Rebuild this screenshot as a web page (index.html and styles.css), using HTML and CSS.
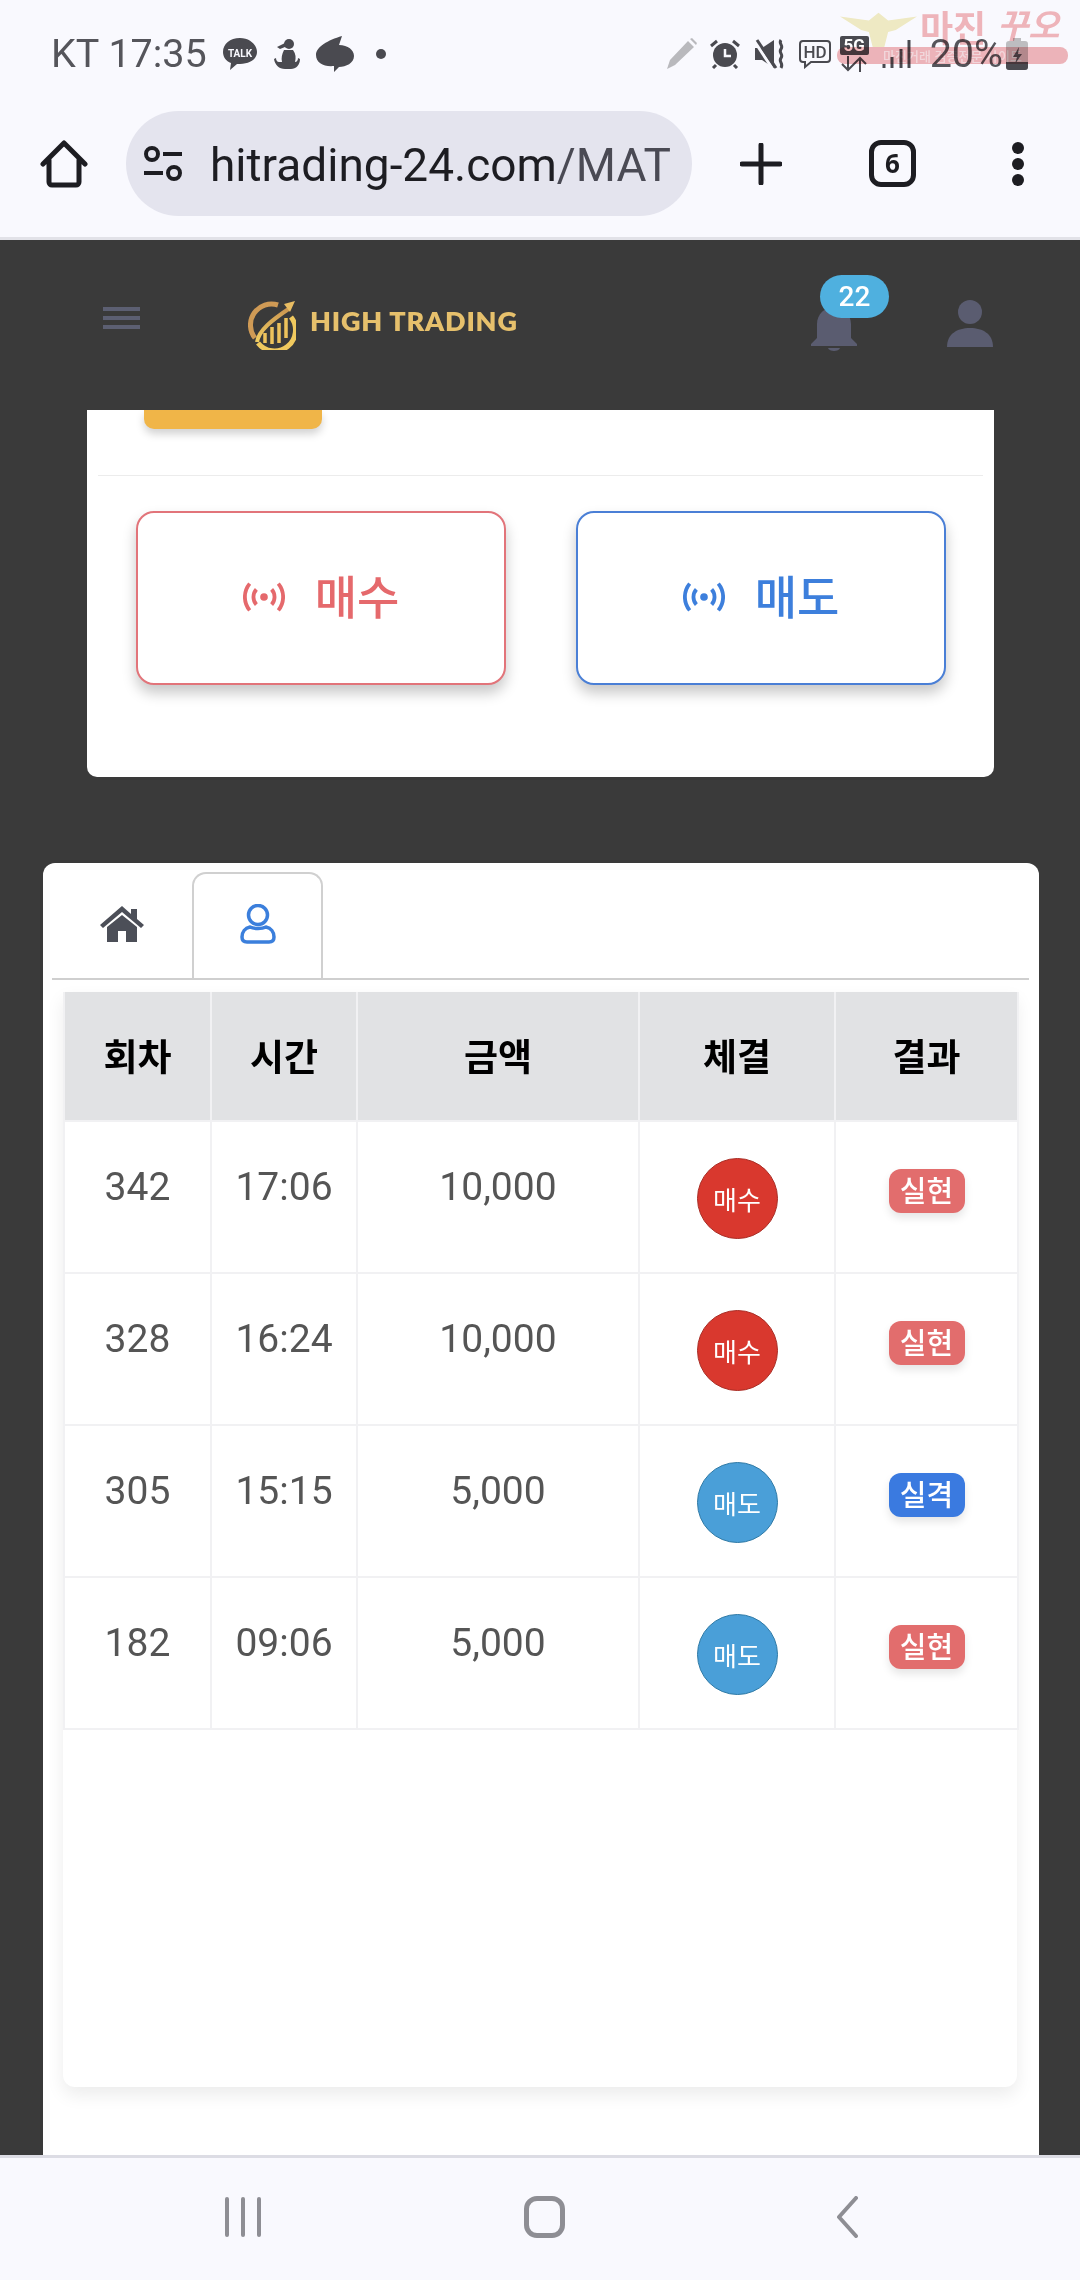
FILE: index.html
```html
<!DOCTYPE html>
<html lang="ko">
<head>
  <meta charset="UTF-8">
  <meta name="viewport" content="width=device-width, initial-scale=1.0">
  <title>High Trading</title>
  <link rel="stylesheet" href="styles.css">
</head>
<body>
  <!-- phone status bar + browser toolbar -->
  <div class="chrome">
    <div class="statusbar">
      <div class="status-left">
        <span class="status-text">KT 17:35</span>
        <svg class="ic-talk" viewBox="0 0 36 34"><path d="M18 1C8 1 1 7 1 15c0 5 3 9 8 11l-1 7 7-6h3c10 0 17-5 17-12S28 1 18 1z" fill="#4a4a50"/><text x="18" y="20" text-anchor="middle" class="talk-label">TALK</text></svg>
        <svg class="ic-figure" viewBox="0 0 26 32"><circle cx="15" cy="6" r="5" fill="#4a4a50"/><path d="M3 9l8-4v4l-5 2z" fill="#4a4a50"/><path d="M10 12h9c3 4 3 8 2 12 2 0 3-2 3-4l2 1c0 6-4 10-9 10h-6C5 31 1 27 0 21l2-1c0 2 1 4 3 4h3c-1-4 0-8 2-12z" fill="#4a4a50"/></svg>
        <svg class="ic-swirl" viewBox="0 0 38 36"><path d="M26 0l-3 9c9 0 15 5 15 11 0 7-8 11-15 11l-5 5 0-6C8 31 0 27 0 19 0 11 12 4 26 0z" fill="#4a4a50"/></svg>
        <span class="status-dot"></span>
      </div>
      <div class="status-right">
        <svg class="ic-pencil" viewBox="0 0 31 32"><path d="M1 31l3-9L22 3l6 6L9 27zM24 1l2-1 5 5-1 2z" fill="#b9b9bd"/></svg>
        <svg class="ic-alarm" viewBox="0 0 30 30"><circle cx="15" cy="16" r="12" fill="#4a4a50"/><path d="M15 10v7h6" fill="none" stroke="#f9f9fe" stroke-width="2.5"/><path d="M1 7l6-5M29 7l-6-5" stroke="#4a4a50" stroke-width="3"/><path d="M6 26l-3 3M24 26l3 3" stroke="#4a4a50" stroke-width="3"/></svg>
        <svg class="ic-mute" viewBox="0 0 30 30"><path d="M0 9h7l12-8v28L7 21H0z" fill="#4a4a50"/><path d="M0 3l17 26" stroke="#f9f9fe" stroke-width="3"/><path d="M2 1l19 28" stroke="#4a4a50" stroke-width="3"/><path d="M26 1c-3 4 3 5 0 9s3 5 0 9 3 5 0 10" fill="none" stroke="#4a4a50" stroke-width="3"/></svg>
        <svg class="ic-hd" viewBox="0 0 34 30"><path d="M5 2h24a3 3 0 0 1 3 3v15a3 3 0 0 1-3 3H13l-6 5v-5H5a3 3 0 0 1-3-3V5a3 3 0 0 1 3-3z" fill="none" stroke="#4a4a50" stroke-width="2"/><text x="17" y="19" text-anchor="middle" class="hd-label">HD</text></svg>
        <div class="net">
          <span class="net-5g">5G</span>
          <svg class="ic-arrows" viewBox="0 0 28 16"><path d="M8 0v14M2 8l6 6 6-6M20 16V2M14 8l6-6 6 6" fill="none" stroke="#4a4a50" stroke-width="2"/></svg>
        </div>
        <svg class="ic-signal" viewBox="0 0 30 30"><path d="M2 25v4M10 18v11M19 10v19M27 1v28" stroke="#4a4a50" stroke-width="3"/></svg>
        <span class="status-text status-batt">20%</span>
        <svg class="ic-batt" viewBox="0 0 22 32"><path d="M7 0h8v3h4a3 3 0 0 1 3 3v23a3 3 0 0 1-3 3H3a3 3 0 0 1-3-3V6a3 3 0 0 1 3-3h4z" fill="#bdbdc0"/><path d="M0 24h22v5a3 3 0 0 1-3 3H3a3 3 0 0 1-3-3z" fill="#4a4a50"/><path d="M13 9l-6 10h4l-2 7 7-10h-4z" fill="#4a4a50"/></svg>
      </div>
      <!-- site watermark stamped on the capture -->
      <div class="watermark">
        <svg class="wm-eagle" viewBox="0 0 80 36"><path d="M0 4l30 4 10-8 10 8 30-4-22 14-8 2-4 16h-12l-4-16-8-2z" fill="#f4efc4"/></svg>
        <span class="wm-title">마진</span>
        <span class="wm-brand">꾸오</span>
        <span class="wm-bar">마진거래 검증전문 사이트</span>
      </div>
    </div>
    <div class="toolbar">
      <svg class="ic-home" viewBox="0 0 48 48"><path d="M3 24L24 3l21 21M9 20v22a3 3 0 0 0 3 3h24a3 3 0 0 0 3-3V20" fill="none" stroke="#1d1d22" stroke-width="5" stroke-linecap="round" stroke-linejoin="round"/></svg>
      <div class="urlbar">
        <svg class="ic-tune" viewBox="0 0 40 36"><circle cx="9" cy="8" r="6" fill="none" stroke="#1d1d22" stroke-width="4"/><path d="M20 8h19M1 27h19" stroke="#1d1d22" stroke-width="4"/><circle cx="31" cy="27" r="6" fill="none" stroke="#1d1d22" stroke-width="4"/></svg>
        <span class="url-text">hitrading-24.com<span class="url-path">/MAT</span></span>
      </div>
      <svg class="ic-plus" viewBox="0 0 42 42"><path d="M21 2v38M2 21h38" stroke="#1d1d22" stroke-width="5" stroke-linecap="round"/></svg>
      <span class="tabcount">6</span>
      <div class="kebab"><i></i><i></i><i></i></div>
    </div>
  </div>

  <header class="site-header">
    <div class="burger"><i></i><i></i><i></i></div>
    <svg class="logo-mark" viewBox="0 0 48 50">
      <defs>
        <linearGradient id="goldA" x1="0" y1="0" x2="0" y2="1"><stop offset="0" stop-color="#c99450"/><stop offset="1" stop-color="#f2cf62"/></linearGradient>
      </defs>
      <path d="M30 5A21 21 0 0 0 7 38" fill="none" stroke="#cf9a55" stroke-width="5"/>
      <path d="M43 17A21 21 0 0 1 10 43" fill="none" stroke="#f0c95e" stroke-width="5"/>
      <path d="M9 42C11 30 24 20 42 8" fill="none" stroke="url(#goldA)" stroke-width="4"/>
      <path d="M47 1l-11 3 6 8z" fill="#e8bc62"/>
      <path d="M17 43V33M24 44V27M31 43V23M38 38V18" stroke="#eec35c" stroke-width="3.5"/>
    </svg>
    <span class="logo-text">HIGH TRADING</span>
    <div class="bell">
      <svg class="ic-bell" viewBox="0 0 48 46"><path d="M24 2c-9 0-17 7-17 17v14l-6 6v2h46v-2l-6-6V19C41 9 33 2 24 2z" fill="#5a5c70"/><path d="M18 43h12c-1 4-11 4-12 0z" fill="#5a5c70"/></svg>
      <span class="bell-count">22</span>
    </div>
    <svg class="ic-user" viewBox="0 0 48 48"><circle cx="24" cy="12" r="12" fill="#5a5c70"/><path d="M1 47c0-13 10-19 23-19s23 6 23 19z" fill="#5a5c70"/></svg>
  </header>

  <main class="content">
    <section class="order-card">
      <div class="submit-stub"></div>
      <hr class="order-rule">
      <div class="order-btns">
        <button class="order-btn buy">
          <svg class="ic-live" viewBox="0 0 44 32"><circle cx="22" cy="16" r="4"/><path class="wave" d="M14 8a12 12 0 0 0 0 16M30 8a12 12 0 0 1 0 16M7 2a22 22 0 0 0 0 28M37 2a22 22 0 0 1 0 28"/></svg>
          <span class="order-label">매수</span>
        </button>
        <button class="order-btn sell">
          <svg class="ic-live" viewBox="0 0 44 32"><circle cx="22" cy="16" r="4"/><path class="wave" d="M14 8a12 12 0 0 0 0 16M30 8a12 12 0 0 1 0 16M7 2a22 22 0 0 0 0 28M37 2a22 22 0 0 1 0 28"/></svg>
          <span class="order-label">매도</span>
        </button>
      </div>
    </section>

    <section class="history">
      <div class="tabs">
        <div class="tab">
          <svg class="ic-tabhome" viewBox="0 0 44 36"><path d="M22 0L0 19l3 3L22 6l19 16 3-3-7-6V3h-6v5z" fill="#4c4f58"/><path d="M7 21L22 9l15 12v15H26V25h-8v11H7z" fill="#4c4f58"/></svg>
        </div>
        <div class="tab active">
          <svg class="ic-tabuser" viewBox="0 0 36 40"><circle cx="18" cy="11" r="9.5" fill="none" stroke="#3b7fdc" stroke-width="3.5"/><path d="M10 23c4 2 12 2 16 0 5 1 8 5 8 10 0 4-2 5-5 5H7c-3 0-5-1-5-5 0-5 3-9 8-10z" fill="none" stroke="#3b7fdc" stroke-width="3.5"/></svg>
        </div>
      </div>
      <div class="table-card">
        <table class="trades">
          <colgroup>
            <col class="c-round"><col class="c-time"><col class="c-amount"><col class="c-side"><col class="c-result">
          </colgroup>
          <thead>
            <tr><th>회차</th><th>시간</th><th>금액</th><th>체결</th><th>결과</th></tr>
          </thead>
          <tbody>
            <tr>
              <td>342</td><td>17:06</td><td>10,000</td>
              <td class="cell-side"><span class="side red">매수</span></td>
              <td class="cell-result"><span class="result win">실현</span></td>
            </tr>
            <tr>
              <td>328</td><td>16:24</td><td>10,000</td>
              <td class="cell-side"><span class="side red">매수</span></td>
              <td class="cell-result"><span class="result win">실현</span></td>
            </tr>
            <tr>
              <td>305</td><td>15:15</td><td>5,000</td>
              <td class="cell-side"><span class="side blue">매도</span></td>
              <td class="cell-result"><span class="result lose">실격</span></td>
            </tr>
            <tr>
              <td>182</td><td>09:06</td><td>5,000</td>
              <td class="cell-side"><span class="side blue">매도</span></td>
              <td class="cell-result"><span class="result win">실현</span></td>
            </tr>
          </tbody>
        </table>
      </div>
    </section>
  </main>

  <nav class="navbar">
    <div class="nav-recents"><i></i><i></i><i></i></div>
    <span class="nav-home"></span>
    <svg class="nav-back" viewBox="0 0 22 42"><path d="M20 2L3 21l17 19" fill="none" stroke="#8e8e94" stroke-width="4" stroke-linecap="round" stroke-linejoin="round"/></svg>
  </nav>
</body>
</html>
```

FILE: styles.css
```css
* {
  box-sizing: border-box;
}

body {
  margin: 0;
  height: 2280px;
  display: flex;
  flex-direction: column;
  overflow: hidden;
  background: #3a3a3a;
  font-family: Roboto, "Noto Sans CJK KR", sans-serif;
}

svg {
  display: block;
  flex: none;
}

/* browser chrome */
.chrome {
  height: 240px;
  background: #f9f9fe;
  border-bottom: 3px solid #e2e2e8;
  flex: none;
}

.statusbar {
  position: relative;
  height: 108px;
  padding: 36px 52px 0 51px;
  display: flex;
  justify-content: space-between;
  align-items: flex-start;
}

.status-left,
.status-right {
  display: flex;
  align-items: center;
  height: 36px;
}

.status-text {
  font-size: 39.5px;
  color: #55555b;
  line-height: 36px;
}

.ic-talk { width: 36px; height: 34px; margin-left: 15px; }
.ic-figure { width: 26px; height: 32px; margin-left: 16px; }
.ic-swirl { width: 38px; height: 36px; margin-left: 16px; }

.talk-label {
  font: 700 10px Roboto, sans-serif;
  fill: #f9f9fe;
}

.hd-label {
  font: 500 17px Roboto, sans-serif;
  fill: #4a4a50;
}

.status-dot {
  width: 10px;
  height: 10px;
  border-radius: 50%;
  background: #4a4a50;
  margin-left: 22px;
}

.ic-pencil { width: 31px; height: 32px; }
.ic-alarm { width: 30px; height: 30px; margin-left: 13px; }
.ic-mute { width: 30px; height: 30px; margin-left: 15px; }
.ic-hd { width: 34px; height: 30px; margin-left: 13px; }

.net {
  margin-left: 8px;
  width: 29px;
}

.net-5g {
  display: block;
  height: 19px;
  background: #4a4a50;
  color: #fff;
  font-size: 17px;
  font-weight: 700;
  line-height: 19px;
  text-align: center;
  border-radius: 2px;
}

.ic-arrows { width: 28px; height: 16px; margin-top: 1px; }
.ic-signal { width: 30px; height: 30px; margin-left: 13px; }
.status-batt { margin-left: 18px; }
.ic-batt { width: 22px; height: 32px; margin-left: 3px; }

.watermark {
  position: absolute;
  left: 837px;
  top: 8px;
  width: 231px;
  height: 56px;
  mix-blend-mode: multiply;
}

.wm-eagle {
  position: absolute;
  left: 3px;
  top: 4px;
  width: 77px;
  height: 36px;
}

.wm-title {
  position: absolute;
  left: 83px;
  top: -2px;
  font: 700 36px/40px "Noto Sans CJK KR", sans-serif;
  color: #f4b9bb;
  white-space: nowrap;
}

.wm-brand {
  position: absolute;
  left: 160px;
  top: -4px;
  font: italic 700 34px/40px "Noto Sans CJK KR", sans-serif;
  color: #f4b9bb;
  white-space: nowrap;
}

.wm-bar {
  position: absolute;
  left: 0;
  right: 0;
  top: 39px;
  height: 17px;
  border-radius: 8px;
  background: #f2b8ba;
  color: #f7dcdc;
  font: 500 13px/17px "Noto Sans CJK KR", sans-serif;
  text-align: center;
}

.toolbar {
  display: flex;
  align-items: center;
  height: 105px;
  margin-top: 3px;
  padding-left: 40px;
}

.ic-home { width: 48px; height: 48px; }

.urlbar {
  width: 566px;
  height: 105px;
  margin-left: 38px;
  padding-left: 17px;
  background: #e4e4ee;
  border-radius: 53px;
  display: flex;
  align-items: center;
}

.ic-tune { width: 40px; height: 36px; flex: none; }

.url-text {
  margin: 2px 0 0 27px;
  font-size: 46px;
  color: #1d1d22;
  white-space: nowrap;
}

.url-path { color: #4a4a54; }

.ic-plus { width: 42px; height: 42px; margin-left: 48px; }

.tabcount {
  width: 47px;
  height: 47px;
  margin-left: 87px;
  border: 5px solid #1d1d22;
  border-radius: 12px;
  color: #1d1d22;
  font: 700 26px/37px "Open Sans", sans-serif;
  text-align: center;
}

.kebab {
  margin-left: 96px;
  display: flex;
  flex-direction: column;
  gap: 4px;
}

.kebab i {
  display: block;
  width: 12px;
  height: 12px;
  border-radius: 50%;
  background: #1d1d22;
}

/* site header */
.site-header {
  position: relative;
  height: 170px;
  flex: none;
  display: flex;
  align-items: flex-start;
  padding: 60px 0 0 103px;
  background: #3a3a3a;
}

.burger {
  width: 37px;
  margin-top: 7px;
  display: flex;
  flex-direction: column;
  gap: 5px;
}

.burger i {
  display: block;
  height: 4px;
  background: #5c5f72;
}

.logo-mark {
  width: 48px;
  height: 50px;
  margin-left: 108px;
}

.logo-text {
  width: 207px;
  margin: 5px 0 0 14px;
  font: 800 27px/32px Lato, sans-serif;
  letter-spacing: .8px;
  color: #e6c06c;
  white-space: nowrap;
}

.bell {
  position: relative;
  width: 48px;
  margin: 5px 0 0 293px;
}

.ic-bell { width: 48px; height: 46px; }

.bell-count {
  position: absolute;
  left: 10px;
  top: -30px;
  width: 69px;
  height: 43px;
  border-radius: 22px;
  background: #4fb0df;
  color: #fff;
  font-size: 28px;
  font-weight: 500;
  line-height: 43px;
  text-align: center;
}

.ic-user {
  width: 48px;
  height: 48px;
  margin-left: 88px;
}

/* scrolled page */
.content {
  flex: 1;
  min-height: 0;
  overflow: hidden;
  display: flex;
  flex-direction: column;
}

.order-card {
  flex: none;
  width: 907px;
  height: 367px;
  margin-left: 87px;
  background: #fff;
  border-radius: 0 0 10px 10px;
}

.submit-stub {
  width: 178px;
  height: 19px;
  margin-left: 57px;
  background: #f0b548;
  border-radius: 0 0 10px 10px;
  box-shadow: 0 5px 8px rgba(0, 0, 0, .18);
}

.order-rule {
  margin: 46px 11px 0;
  border: 0;
  border-top: 1px solid #ececec;
}

.order-btns {
  display: flex;
  gap: 70px;
  margin: 35px 48px 0 49px;
}

.order-btn {
  flex: 1;
  height: 174px;
  display: flex;
  align-items: center;
  justify-content: center;
  gap: 30px;
  padding: 0 0 2px;
  background: #fff;
  border: 2px solid;
  border-radius: 18px;
  font: 500 46px "Noto Sans CJK KR", sans-serif;
  box-shadow: 0 8px 14px rgba(0, 0, 0, .22);
}

.order-label {
  line-height: 1;
  margin-bottom: 6px;
}

.ic-live { width: 42px; height: 32px; fill: currentColor; }

.wave {
  fill: none;
  stroke: currentColor;
  stroke-width: 4;
}

.buy { color: #e5696c; border-color: #e2747a; }
.sell { color: #3d7fdc; border-color: #4a7fd6; }

.history {
  flex: none;
  width: 996px;
  height: 1400px;
  margin: 86px 0 0 43px;
  background: #fff;
  border-radius: 12px 12px 0 0;
}

.tabs {
  display: flex;
  height: 117px;
  margin: 0 10px 0 9px;
  padding-top: 9px;
  border-bottom: 2px solid #cfcfcf;
}

.tab {
  width: 140px;
  height: 106px;
  display: flex;
  align-items: center;
  justify-content: center;
}

.tab.active {
  width: 131px;
  border: 2px solid #d0d0d0;
  border-bottom: 0;
  border-radius: 14px 14px 0 0;
  background: #fff;
}

.ic-tabhome { width: 44px; height: 36px; margin-top: -2px; }
.ic-tabuser { width: 36px; height: 40px; margin-top: -4px; }

.table-card {
  width: 954px;
  height: 1095px;
  margin: 12px 0 0 20px;
  background: #fff;
  border-radius: 0 0 12px 12px;
  box-shadow: 0 8px 18px rgba(0, 0, 0, .08);
}

.trades {
  width: 954px;
  table-layout: fixed;
  border-collapse: collapse;
}

.c-round { width: 147px; }
.c-time { width: 146px; }
.c-amount { width: 282px; }
.c-side { width: 196px; }
.c-result { width: 183px; }

.trades th {
  height: 129px;
  padding-bottom: 4px;
  background: #e1e2e4;
  border: 2px solid #f1f1f3;
  border-top: 0;
  color: #000;
  font: 700 37px "Noto Sans CJK KR", sans-serif;
  text-align: center;
}

.trades td {
  height: 152px;
  padding: 43px 0 0;
  border: 2px solid #f1f1f3;
  color: #555;
  font-size: 39px;
  line-height: 44px;
  text-align: center;
  vertical-align: top;
}

.trades .cell-side { padding-top: 36px; }
.trades .cell-result { padding-top: 47px; }

.side {
  display: flex;
  align-items: center;
  justify-content: center;
  width: 81px;
  height: 81px;
  margin: 0 auto;
  border: 1px solid;
  border-radius: 50%;
  color: #fff;
  font: 400 26px "Noto Sans CJK KR", sans-serif;
}

.red { background: #d9382e; border-color: #a92d25; }
.blue { background: #4a9fd8; border-color: #2f7aa6; }

.result {
  display: block;
  width: 76px;
  height: 44px;
  margin: 0 auto;
  border-radius: 12px;
  color: #fff;
  font: 500 29px/41px "Noto Sans CJK KR", sans-serif;
  box-shadow: 0 5px 8px rgba(0, 0, 0, .1);
}

.win { background: #e26d6d; }
.lose { background: #3a7ae0; }

/* android nav */
.navbar {
  height: 125px;
  flex: none;
  position: relative;
  display: flex;
  align-items: center;
  background: #f9f9fe;
  border-top: 3px solid #dcdce4;
  padding: 0 0 4px 225px;
}

.nav-recents {
  display: flex;
  gap: 12px;
}

.nav-recents i {
  display: block;
  width: 4px;
  height: 40px;
  border-radius: 2px;
  background: #8e8e94;
}

.nav-home {
  width: 41px;
  height: 42px;
  margin-left: 263px;
  border: 5px solid #8e8e94;
  border-radius: 13px;
}

.nav-back {
  width: 22px;
  height: 42px;
  margin-left: 271px;
}
```
